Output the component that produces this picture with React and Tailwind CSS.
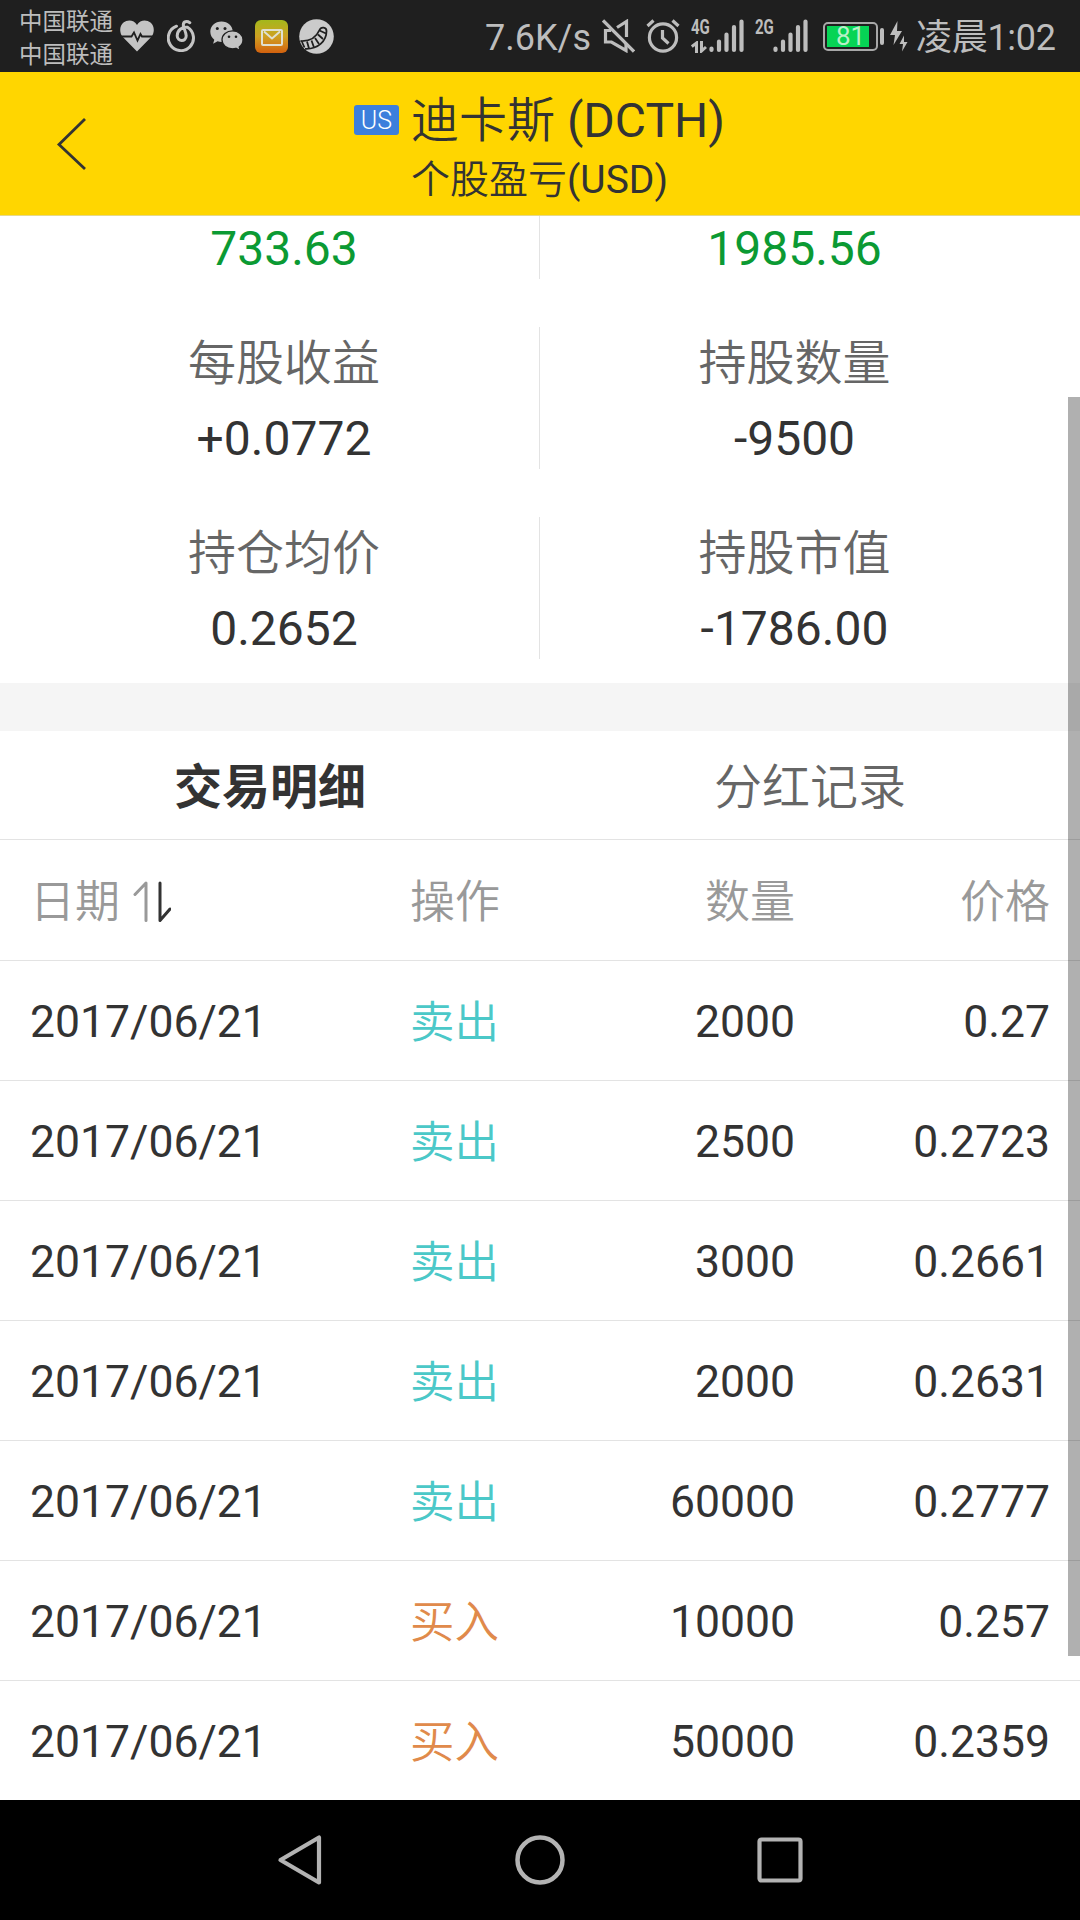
import clsx from 'clsx';

const TRADES = [
  { date: '2017/06/21', side: 'sell', qty: '2000', price: '0.27' },
  { date: '2017/06/21', side: 'sell', qty: '2500', price: '0.2723' },
  { date: '2017/06/21', side: 'sell', qty: '3000', price: '0.2661' },
  { date: '2017/06/21', side: 'sell', qty: '2000', price: '0.2631' },
  { date: '2017/06/21', side: 'sell', qty: '60000', price: '0.2777' },
  { date: '2017/06/21', side: 'buy', qty: '10000', price: '0.257' },
  { date: '2017/06/21', side: 'buy', qty: '50000', price: '0.2359' },
];

const GRID = 'grid grid-cols-[380px_130px_255px_255px] items-center px-[30px] h-[120px]';

// ── Status bar icons ───────────────────────────────────────────────────────

function HeartIcon() {
  return (
    <svg className="w-[34px] h-[32px]" viewBox="0 0 34 32" fill="none">
      <path d="M17 31.500L2.800 17C-1 12.500-.5 6 3.500 2.600 7.500-.8 14-.3 17 5 20-.3 26.500-.8 30.500 2.600 34.500 6 35 12.500 31.200 17z" fill="#c4c4c4" />
      <path d="M0 16.500h11.500l2.500-4 3.500 8 3-6.500 1.500 2.500H34" stroke="#1f1f1f" strokeWidth="1.800" />
    </svg>
  );
}

function MusicIcon() {
  return (
    <svg className="w-[30px] h-[32px]" viewBox="0 0 30 32" fill="none" stroke="#c4c4c4" strokeWidth="3" strokeLinecap="round">
      <path d="M9.500 6.200A12.600 12.600 0 1 0 20.500 7.300C15 6.500 10.200 10.500 10.200 15.800c0 6 9 6.500 9 0C19.200 12 16.300 8 16.300 5c0-3.800 3.700-4.200 6.500-2.300" />
    </svg>
  );
}

function WechatIcon() {
  return (
    <svg className="w-[34px] h-[30px]" viewBox="0 0 34 30">
      <path d="M11.500.5C5 .5.3 5 .3 10.800c0 3.200 1.500 6 4 7.900l-1.200 4.100 4.500-2.500c1.200.4 2.600.6 3.900.6 6.500 0 11.300-4.500 11.300-10.100S18 .5 11.500.5z" fill="#c4c4c4" />
      <path d="M22.500 9.800c-6 0-10.500 4-10.500 9s4.500 9 10.500 9c1.200 0 2.400-.2 3.400-.5l4.300 2.200-1-3.500c2.500-1.700 3.800-4.200 3.800-7.200 0-5-4.500-9-10.500-9z" fill="#c4c4c4" stroke="#1f1f1f" strokeWidth="1.300" />
      <g fill="#1f1f1f">
        <circle cx="7.300" cy="7.500" r="1.500" />
        <circle cx="15" cy="7.500" r="1.500" />
        <circle cx="19" cy="15.800" r="1.300" />
        <circle cx="26" cy="15.800" r="1.300" />
      </g>
    </svg>
  );
}

function MailIcon() {
  return (
    <span className="flex w-[33px] h-[33px] items-center justify-center rounded-[6px] bg-linear-to-b from-[#a3b81c] via-[#cda022] to-[#d2600e]">
      <svg className="mt-[2px] w-[22px] h-[17px]" viewBox="0 0 22 17" fill="none" stroke="#e0e0d0" strokeWidth="2" strokeLinejoin="round">
        <rect x="1" y="1" width="20" height="15" rx="1" />
        <path d="M3 2.500L11 9.500l8-7" />
      </svg>
    </span>
  );
}

function BeanIcon() {
  return (
    <svg className="w-[35px] h-[35px]" viewBox="0 0 35 35" fill="none">
      <circle cx="17.500" cy="17.500" r="17.300" fill="#cbcbcb" />
      <path d="M1.500 22C11 22.500 17 19 20.500 11c1.500-3.500 7-3 7 1C27.500 22 19 30.500 6 29.800" stroke="#1f1f1f" strokeWidth="1.800" />
      <path d="M3 23l2.500 5.500M8 22.500l2 7M12.500 21.500l2.500 7M16 19l4 6M19 15.500l5 4.500M20.500 11.500l6.500 3" stroke="#1f1f1f" strokeWidth="1.800" />
    </svg>
  );
}

function MuteIcon() {
  return (
    <svg className="w-[33px] h-[34px]" viewBox="0 0 33 34" fill="none" stroke="#bdbdbd" strokeWidth="3.200">
      <path d="M1 1.500L32 32.500" />
      <path d="M9 11.500H3.500v11.500h6L24 31.500V25" />
      <path d="M15 8.500l9.500-6V18" />
    </svg>
  );
}

function AlarmIcon() {
  return (
    <svg className="w-[34px] h-[34px]" viewBox="0 0 34 34" fill="none" stroke="#bdbdbd" strokeWidth="3.200">
      <circle cx="17" cy="18.500" r="13.600" />
      <path d="M1.500 7l6-5.500M32.500 7l-6-5.500" />
      <path d="M16.500 11v8l6 5.500" />
    </svg>
  );
}

function Bars() {
  return (
    <svg className="w-[35px] h-[34px]" viewBox="0 0 35 34" stroke="#bdbdbd" strokeWidth="4.200" strokeLinecap="round">
      <path d="M2.500 29.500v1.500M10 22.500v8.500M17.500 15.500v15.500M25 8v23M32.500 2.500v28.500" />
    </svg>
  );
}

function Signal({ label, arrows }) {
  return (
    <div className="flex">
      <div className="flex flex-col justify-between w-[18px] h-[34px]">
        <span className="w-[18px] origin-left scale-x-[0.75] text-[20px] leading-[17px] font-bold">{label}</span>
        {arrows && (
          <svg className="w-[17px] h-[12px]" viewBox="0 0 17 12" fill="none" stroke="#bdbdbd" strokeWidth="3">
            <path d="M.8 5.500L5.500 2V12M10.500 0v10L15 6" />
          </svg>
        )}
      </div>
      <Bars />
    </div>
  );
}

function Battery() {
  return (
    <div className="flex items-center">
      <div className="w-[55px] h-[29px] rounded-[5px] border-2 border-[#a8a8a8] p-[2px]">
        <div className="flex w-[42px] h-[21px] items-center justify-center bg-[#06d455] pl-[5px] text-[26px] leading-none text-[#b9f0c8]">81</div>
      </div>
      <span className="ml-[2px] w-[4px] h-[17px] rounded-[2px] bg-[#bdbdbd]" />
      <svg className="ml-[6px] w-[18px] h-[31px]" viewBox="0 0 18 31" fill="#bdbdbd">
        <path d="M7.500 0L0 14h5L3.500 24 12 10H7z" />
        <path d="M14 14.500L9.500 23h3.500l-1 7.500L17.500 21H14z" />
      </svg>
    </div>
  );
}

function StatusBar() {
  return (
    <div className="flex h-[72px] items-center bg-[#1f1f1f] pl-[19px] pr-[24px] text-[#bdbdbd]">
      <div className="w-[95px] pt-[5px] text-[23.500px] leading-[33px] whitespace-nowrap">
        <div>中国联通</div>
        <div>中国联通</div>
      </div>
      <div className="ml-[6px] flex items-center">
        <HeartIcon />
        <div className="ml-[13px] flex"><MusicIcon /></div>
        <div className="ml-[13px] flex"><WechatIcon /></div>
        <div className="ml-[11px] flex"><MailIcon /></div>
        <div className="ml-[11px] flex"><BeanIcon /></div>
      </div>
      <div className="ml-auto flex items-center">
        <span className="w-[117px] pt-[4px] text-[36px] leading-none">7.6K/s</span>
        <MuteIcon />
        <div className="ml-[11px] flex"><AlarmIcon /></div>
        <div className="ml-[11px]"><Signal label="4G" arrows /></div>
        <div className="ml-[11px]"><Signal label="2G" /></div>
        <div className="ml-[15px]"><Battery /></div>
        <span className="ml-[8px] w-[140px] whitespace-nowrap pt-[4px] text-[36px] leading-none tracking-[-0.3px]">凌晨1:02</span>
      </div>
    </div>
  );
}

// ── Page sections ──────────────────────────────────────────────────────────

function Header() {
  return (
    <header className="grid h-[144px] grid-cols-[1fr_auto_1fr] border-b border-[#e6d98a] bg-[#ffd600] text-[#333]">
      <button className="flex items-center pl-[56px]" aria-label="返回">
        <svg className="w-[32px] h-[54px]" viewBox="0 0 32 54" fill="none" stroke="#333" strokeWidth="2.800">
          <path d="M29 2L3 27.500 29 52" />
        </svg>
      </button>
      <div className="flex flex-col pt-[12px] pr-px">
        <div className="flex h-[72px] items-center gap-[12px] text-[48px] whitespace-nowrap">
          <span className="flex h-[30px] w-[45px] items-center justify-center rounded-[3px] bg-[#3c7fdc] pt-[2px] text-[25px] font-light text-white">US</span>
          <h1 className="pt-[2px] leading-none">
            <span className="font-[350]">迪卡斯</span> (DCTH)
          </h1>
        </div>
        <div className="flex h-[46px] items-center justify-center pt-[3px] text-[39px] leading-none">
          <span className="font-[350]">个股盈亏</span>(USD)
        </div>
      </div>
    </header>
  );
}

function Stat({ label, value, green }) {
  return (
    <div className="flex flex-col items-center justify-end border-[#e3e3e3] first:border-r">
      {label && <div className="mb-[12px] h-[68px] pt-[2px] text-[48px] leading-[68px] font-[350] text-[#666]">{label}</div>}
      <div className={clsx('h-[61px] text-[48px] leading-[62px]', green ? 'text-[#0b9a33]' : 'text-[#333]')}>{value}</div>
    </div>
  );
}

function Stats() {
  return (
    <section className="flex flex-col gap-[48px] pl-[29px] pr-[31px] pb-[24px]">
      <div className="grid h-[63px] grid-cols-[511px_509px]">
        <Stat value="733.63" green />
        <Stat value="1985.56" green />
      </div>
      <div className="grid h-[142px] grid-cols-[511px_509px]">
        <Stat label="每股收益" value="+0.0772" />
        <Stat label="持股数量" value="-9500" />
      </div>
      <div className="grid h-[142px] grid-cols-[511px_509px]">
        <Stat label="持仓均价" value="0.2652" />
        <Stat label="持股市值" value="-1786.00" />
      </div>
    </section>
  );
}

function Tabs() {
  return (
    <div className="grid h-[109px] grid-cols-2 border-b border-[#e3e3e3] pt-[6px] text-[48px]">
      <button className="font-bold text-[#333]">交易明细</button>
      <button className="font-[350] text-[#666]">分红记录</button>
    </div>
  );
}

function SortIcon() {
  return (
    <svg className="mb-[3px] w-[38px] h-[42px]" viewBox="0 0 38 42" fill="none" strokeWidth="3" strokeLinecap="round" strokeLinejoin="round">
      <path d="M2 13.500L13 2v37.500" stroke="#999" />
      <path d="M27 2v37.500L37 28" stroke="#333" />
    </svg>
  );
}

function TradeTable() {
  return (
    <section>
      <div className={clsx(GRID, 'pt-[6px] text-[45px] font-[350] text-[#999]')}>
        <div className="flex items-center gap-[13px]">
          日期
          <SortIcon />
        </div>
        <div>操作</div>
        <div className="text-right">数量</div>
        <div className="text-right">价格</div>
      </div>
      {TRADES.map((t, i) => (
        <div key={i} className={clsx(GRID, 'border-t border-[#e3e3e3] pt-[4px] text-[44.500px] text-[#333]')}>
          <div>{t.date}</div>
          <div className={clsx('pt-[2px] font-[350]', t.side === 'sell' ? 'text-[#4bc8c8]' : 'text-[#e08a4b]')}>
            {t.side === 'sell' ? '卖出' : '买入'}
          </div>
          <div className="text-right">{t.qty}</div>
          <div className="text-right">{t.price}</div>
        </div>
      ))}
    </section>
  );
}

function NavBar() {
  return (
    <nav className="flex h-[120px] items-center justify-center gap-[190px] bg-black">
      <svg className="w-[50px] h-[52px]" viewBox="0 0 50 52" fill="none" stroke="#b3b3b3" strokeWidth="4.200" strokeLinejoin="round">
        <path d="M44 3.500v45L5.500 26z" />
      </svg>
      <svg className="w-[50px] h-[50px]" viewBox="0 0 50 50" fill="none" stroke="#b3b3b3" strokeWidth="4.500">
        <circle cx="25" cy="25" r="22.500" />
      </svg>
      <svg className="w-[50px] h-[50px]" viewBox="0 0 50 50" fill="none" stroke="#b3b3b3" strokeWidth="4.200">
        <rect x="4.500" y="4.500" width="41" height="41" rx="2" />
      </svg>
    </nav>
  );
}

export default function App() {
  return (
    <div className="w-[1080px] h-[1920px] overflow-hidden bg-white font-['Roboto','Noto_Sans_CJK_SC',sans-serif]">
      <StatusBar />
      <Header />
      <main className="relative h-[1584px] overflow-hidden">
        <Stats />
        <div className="h-[48px] bg-[#f5f5f5]" />
        <Tabs />
        <TradeTable />
        {/* scroll thumb */}
        <div className="absolute right-0 top-[181px] h-[1259px] w-[12px] bg-black/31" />
      </main>
      <NavBar />
    </div>
  );
}
